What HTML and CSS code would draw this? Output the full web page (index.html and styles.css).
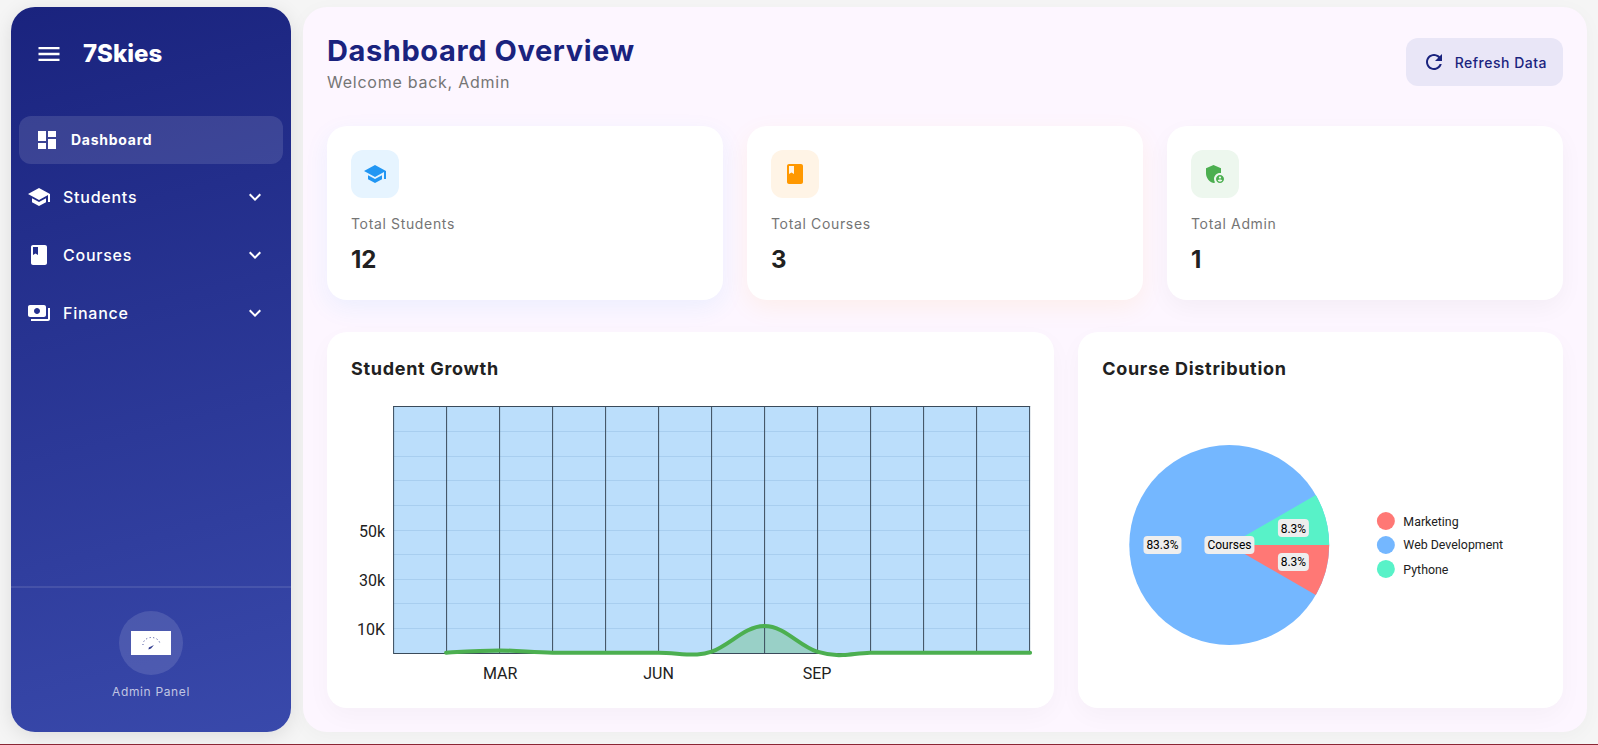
FILE: index.html
```html
<!DOCTYPE html>
<html lang="en">
<head>
    <meta charset="UTF-8">
    <meta name="viewport" content="width=device-width, initial-scale=1.0">
    <title>7Skies Dashboard</title>
    <link rel="stylesheet" href="styles.css">
</head>
<body>
    <aside class="sidebar">
        <div class="sidebar-header">
            <svg class="icon-menu" viewBox="0 0 24 24"><path d="M3 18h18v-2H3v2zm0-5h18v-2H3v2zm0-7v2h18V6H3z"/></svg>
            <span class="logo">7Skies</span>
        </div>
        <nav class="nav">
            <a class="nav-item active">
                <svg class="icon" viewBox="0 0 24 24"><path d="M3 13h8V3H3v10zm0 8h8v-6H3v6zm10 0h8V11h-8v10zm0-18v6h8V3h-8z"/></svg>
                <span>Dashboard</span>
            </a>
            <a class="nav-item">
                <svg class="icon" viewBox="0 0 24 24"><path d="M5 13.18v4L12 21l7-3.82v-4L12 17l-7-3.82zM12 3 1 9l11 6 9-4.91V17h2V9L12 3z"/></svg>
                <span>Students</span>
                <svg class="icon chevron" viewBox="0 0 24 24"><path d="M16.59 8.59 12 13.17 7.41 8.59 6 10l6 6 6-6z"/></svg>
            </a>
            <a class="nav-item">
                <svg class="icon" viewBox="0 0 24 24"><path d="M18 2H6c-1.1 0-2 .9-2 2v16c0 1.1.9 2 2 2h12c1.1 0 2-.9 2-2V4c0-1.1-.9-2-2-2zM6 4h5v8l-2.5-1.5L6 12V4z"/></svg>
                <span>Courses</span>
                <svg class="icon chevron" viewBox="0 0 24 24"><path d="M16.59 8.59 12 13.17 7.41 8.59 6 10l6 6 6-6z"/></svg>
            </a>
            <a class="nav-item">
                <svg class="icon" viewBox="0 0 24 24"><path d="M19 14V6c0-1.1-.9-2-2-2H3c-1.1 0-2 .9-2 2v8c0 1.1.9 2 2 2h14c1.1 0 2-.9 2-2zm-9-1c-1.66 0-3-1.34-3-3s1.34-3 3-3 3 1.34 3 3-1.34 3-3 3zm13-6v11c0 1.1-.9 2-2 2H4v-2h17V7h2z"/></svg>
                <span>Finance</span>
                <svg class="icon chevron" viewBox="0 0 24 24"><path d="M16.59 8.59 12 13.17 7.41 8.59 6 10l6 6 6-6z"/></svg>
            </a>
        </nav>
        <div class="sidebar-footer">
            <div class="avatar">
                <svg class="avatar-logo" viewBox="0 0 40 24">
                    <rect width="40" height="24" fill="#fff"/>
                    <path d="M12 14A8.5 7 0 0 1 29 13" fill="none" stroke="#2f3a8f" stroke-width="1" stroke-dasharray="1 2.6"/>
                    <path d="M17.5 18.5 17.8 16.4 23 14 20 17.5z" fill="#2f3a8f"/>
                </svg>
            </div>
            <div class="avatar-label">Admin Panel</div>
        </div>
    </aside>

    <main class="main">
        <header class="main-header">
            <div>
                <h1>Dashboard Overview</h1>
                <p>Welcome back, Admin</p>
            </div>
            <button class="refresh-btn" type="button">
                <svg class="icon" viewBox="0 0 24 24"><path d="M17.65 6.35C16.2 4.9 14.21 4 12 4c-4.42 0-7.99 3.58-7.99 8s3.57 8 7.99 8c3.73 0 6.84-2.55 7.73-6h-2.08c-.82 2.33-3.04 4-5.65 4-3.31 0-6-2.69-6-6s2.69-6 6-6c1.66 0 3.14.69 4.22 1.78L13 11h7V4l-2.35 2.35z"/></svg>
                Refresh Data
            </button>
        </header>

        <section class="stats">
            <div class="stat-card stat-blue">
                <div class="stat-icon">
                    <svg class="icon" viewBox="0 0 24 24"><path d="M5 13.18v4L12 21l7-3.82v-4L12 17l-7-3.82zM12 3 1 9l11 6 9-4.91V17h2V9L12 3z"/></svg>
                </div>
                <div class="stat-label">Total Students</div>
                <div class="stat-value">12</div>
            </div>
            <div class="stat-card stat-orange">
                <div class="stat-icon">
                    <svg class="icon" viewBox="0 0 24 24"><path d="M18 2H6c-1.1 0-2 .9-2 2v16c0 1.1.9 2 2 2h12c1.1 0 2-.9 2-2V4c0-1.1-.9-2-2-2zM6 4h5v8l-2.5-1.5L6 12V4z"/></svg>
                </div>
                <div class="stat-label">Total Courses</div>
                <div class="stat-value">3</div>
            </div>
            <div class="stat-card stat-green">
                <div class="stat-icon">
                    <svg class="icon" viewBox="0 0 24 24"><path d="M17 11c.34 0 .67.04 1 .09V6.27L10.5 3 3 6.27v4.91c0 4.54 3.2 8.79 7.5 9.82.55-.13 1.08-.32 1.6-.55-.69-.98-1.1-2.17-1.1-3.45 0-3.31 2.69-6 6-6z"/><path d="M17 13c-2.21 0-4 1.79-4 4s1.79 4 4 4 4-1.79 4-4-1.79-4-4-4zm0 1.38c.62 0 1.12.51 1.12 1.12s-.51 1.12-1.12 1.12-1.12-.51-1.12-1.12.5-1.12 1.12-1.12zm0 5.37c-.93 0-1.74-.46-2.24-1.17.05-.72 1.51-1.08 2.24-1.08s2.19.36 2.24 1.08c-.5.71-1.31 1.17-2.24 1.17z"/></svg>
                </div>
                <div class="stat-label">Total Admin</div>
                <div class="stat-value">1</div>
            </div>
        </section>

        <section class="charts">
            <div class="chart-card">
                <h3>Student Growth</h3>
                <svg class="chart" viewBox="351 392 679 292">
                    <defs>
                        <clipPath id="plotClip"><rect x="393" y="406" width="637" height="247"/></clipPath>
                    </defs>
                    <rect x="393" y="406" width="637" height="247" fill="#bbdefb"/>
                    <path class="area" clip-path="url(#plotClip)" d="M446 653C464 651.6 481 650.4 499.5 650.4C518 650.4 534 652.7 552.6 652.7L658.6 652.7C672 652.7 685 655 697 654.5C702 654.2 707 653.3 711.6 651.7C730 645 745 626 764.6 626C784 626 799 646 817 651.7C826 654.5 835 655.5 843 655C852 654.5 860 653 870 652.7L1030 652.7L1030 653Z"/>
                    <path class="grid-h" d="M393 431.5H1030M393 456.5H1030M393 480.5H1030M393 505.5H1030M393 530.5H1030M393 554.5H1030M393 579.5H1030M393 603.5H1030M393 628.5H1030"/>
                    <path class="grid-v" d="M393.5 406V653M446.5 406V653M499.5 406V653M552.5 406V653M605.5 406V653M658.5 406V653M711.5 406V653M764.5 406V653M817.5 406V653M870.5 406V653M923.5 406V653M976.5 406V653M1029.5 406V653"/>
                    <path class="grid-v" d="M393 406.5H1030M393 653.5H1030"/>
                    <path class="curve" d="M446 652.7C464 651.6 481 650.4 499.5 650.4C518 650.4 534 652.7 552.6 652.7L658.6 652.7C672 652.7 685 655 697 654.5C702 654.2 707 653.3 711.6 651.7C730 645 745 626 764.6 626C784 626 799 646 817 651.7C826 654.5 835 655.5 843 655C852 654.5 860 653 870 652.7L1030 652.7"/>
                    <text class="axis end" x="385" y="536.5">50k</text>
                    <text class="axis end" x="385" y="585.5">30k</text>
                    <text class="axis end" x="385" y="634.5">10K</text>
                    <text class="axis mid" x="500" y="679">MAR</text>
                    <text class="axis mid" x="658.5" y="679">JUN</text>
                    <text class="axis mid" x="817" y="679">SEP</text>
                </svg>
            </div>
            <div class="chart-card">
                <h3>Course Distribution</h3>
                <svg class="chart" viewBox="1102 392 437 292">
                    <circle cx="1229.3" cy="545" r="100" fill="#74b7ff"/>
                    <path d="M1229.3 545L1329.3 545A100 100 0 0 1 1315.9 595Z" fill="#ff7875"/>
                    <path d="M1229.3 545L1315.9 495A100 100 0 0 1 1329.3 545Z" fill="#58f2c8"/>
                    <rect class="pie-tag" x="1143.5" y="536" width="38" height="18" rx="4"/>
                    <text class="pie-label" x="1162.5" y="549.5">83.3%</text>
                    <rect class="pie-tag" x="1204.5" y="536" width="50" height="18" rx="4"/>
                    <text class="pie-label" x="1229.5" y="549.5">Courses</text>
                    <rect class="pie-tag" x="1278" y="519" width="31" height="18" rx="4"/>
                    <text class="pie-label" x="1293.5" y="532.5">8.3%</text>
                    <rect class="pie-tag" x="1278" y="553" width="31" height="18" rx="4"/>
                    <text class="pie-label" x="1293.5" y="566.5">8.3%</text>
                    <circle cx="1386" cy="521" r="9" fill="#ff7875"/>
                    <text class="legend" x="1403.5" y="525.5">Marketing</text>
                    <circle cx="1386" cy="545" r="9" fill="#74b7ff"/>
                    <text class="legend" x="1403.5" y="549.5">Web Development</text>
                    <circle cx="1386" cy="569" r="9" fill="#58f2c8"/>
                    <text class="legend" x="1403.5" y="574">Pythone</text>
                </svg>
            </div>
        </section>
    </main>
</body>
</html>
```

FILE: styles.css
```css
* {
    box-sizing: border-box;
}
html, body {
    margin: 0;
    height: 745px;
    overflow: hidden;
}
body {
    display: flex;
    gap: 12px;
    padding: 7px 11px 12px;
    background-color: #f5f5f5;
    border-bottom: 1px solid #8b2635;
    font-family: Inter, "Open Sans", sans-serif;
}
svg {
    display: block;
    fill: currentColor;
}
.icon {
    width: 24px;
    height: 24px;
    flex-shrink: 0;
}

/* sidebar */
.sidebar {
    width: 280px;
    display: flex;
    flex-direction: column;
    border-radius: 24px;
    color: #fff;
    background: linear-gradient(165deg, #1a237e 0%, #3949ab 100%);
    box-shadow: 0 4px 20px rgba(0, 0, 0, 0.1);
}
.sidebar-header {
    display: flex;
    align-items: center;
    gap: 20px;
    padding: 32px 24px;
}
.icon-menu {
    width: 28px;
    height: 28px;
}
.logo {
    padding-top: 1px;
    font-size: 24px;
    font-weight: 800;
    line-height: 28px;
}
.nav {
    flex: 1;
    padding: 16px 8px;
}
.nav-item {
    display: flex;
    align-items: center;
    gap: 12px;
    height: 50px;
    margin-bottom: 8px;
    padding: 0 16px 0 8px;
    font-size: 16px;
    font-weight: 500;
    letter-spacing: 0.75px;
}
.nav-item.active {
    height: 48px;
    padding-left: 16px;
    padding-bottom: 1px;
    border-radius: 12px;
    background-color: rgba(255, 255, 255, 0.12);
    font-size: 14px;
    font-weight: 700;
}
.nav-item.active .icon {
    margin-top: 1px;
}
.chevron {
    margin-left: auto;
}
.sidebar-footer {
    display: flex;
    flex-direction: column;
    align-items: center;
    padding: 23px 24px 31px;
    border-top: 2px solid rgba(255, 255, 255, 0.1);
}
.avatar {
    display: flex;
    align-items: center;
    justify-content: center;
    width: 64px;
    height: 64px;
    border-radius: 50%;
    background-color: rgba(255, 255, 255, 0.12);
}
.avatar-logo {
    width: 40px;
    height: 24px;
}
.avatar-label {
    margin-top: 8px;
    font-size: 12px;
    line-height: 18px;
    letter-spacing: 0.65px;
    color: rgba(255, 255, 255, 0.7);
}

/* main panel */
.main {
    flex: 1;
    min-width: 0;
    display: flex;
    flex-direction: column;
    padding: 24px;
    border-radius: 24px;
    background-color: #fdf6ff;
    box-shadow: 0 4px 20px rgba(0, 0, 0, 0.03);
}
.main-header {
    display: flex;
    align-items: center;
    justify-content: space-between;
    margin-bottom: 33px;
}
.main-header h1 {
    margin: 0;
    font-size: 29px;
    font-weight: 700;
    line-height: 40px;
    letter-spacing: 0.6px;
    color: #1a237e;
}
.main-header p {
    margin: 0;
    font-size: 16px;
    line-height: 22px;
    letter-spacing: 0.75px;
    color: #757575;
}
.refresh-btn {
    display: flex;
    align-items: center;
    gap: 9px;
    height: 48px;
    padding: 0 16px;
    border: none;
    border-radius: 12px;
    background-color: #e9e6f7;
    color: #1a237e;
    font-family: inherit;
    font-size: 14px;
    font-weight: 500;
    letter-spacing: 0.5px;
    cursor: pointer;
}

.stats {
    display: grid;
    grid-template-columns: repeat(3, 1fr);
    gap: 24px;
    margin-bottom: 32px;
}
.stat-card {
    height: 174px;
    padding: 24px;
    border-radius: 20px;
    background-color: #fff;
}
.stat-icon {
    display: flex;
    align-items: center;
    justify-content: center;
    width: 48px;
    height: 48px;
    border-radius: 12px;
}
.stat-blue {
    box-shadow: 0 8px 24px rgba(33, 150, 243, 0.08);
}
.stat-blue .stat-icon {
    background-color: #e6f4ff;
    color: #2196f3;
}
.stat-orange {
    box-shadow: 0 8px 24px rgba(255, 152, 0, 0.08);
}
.stat-orange .stat-icon {
    background-color: #fff4e6;
    color: #ff9800;
}
.stat-green {
    box-shadow: 0 8px 24px rgba(0, 0, 0, 0.04);
}
.stat-green .stat-icon {
    background-color: #edf7ee;
    color: #4caf50;
}
.stat-label {
    margin-top: 15px;
    font-size: 14px;
    line-height: 21px;
    letter-spacing: 0.65px;
    color: #757575;
}
.stat-value {
    margin-top: 8px;
    font-size: 24px;
    font-weight: 700;
    line-height: 36px;
    color: #212121;
}

/* charts */
.charts {
    flex: 1;
    display: grid;
    grid-template-columns: 3fr 2fr;
    gap: 24px;
}
.chart-card {
    padding: 24px;
    border-radius: 20px;
    background-color: #fff;
    box-shadow: 0 8px 24px rgba(0, 0, 0, 0.03);
}
.chart-card h3 {
    margin: 0 0 11px;
    padding-top: 1px;
    font-size: 18px;
    font-weight: 700;
    line-height: 24px;
    letter-spacing: 0.7px;
    color: #212121;
}
.chart {
    width: 100%;
    height: 292px;
    overflow: visible;
}
.area {
    fill: rgba(76, 175, 80, 0.3);
}
.grid-h {
    fill: none;
    stroke: rgba(60, 110, 170, 0.14);
    stroke-width: 1;
}
.grid-v {
    fill: none;
    stroke: #3a4a5a;
    stroke-width: 1;
}
.curve {
    fill: none;
    stroke: #4caf50;
    stroke-width: 4;
    stroke-linecap: round;
}
.axis {
    font-family: Roboto, sans-serif;
    font-size: 16px;
    fill: #212121;
}
.axis.end {
    text-anchor: end;
}
.axis.mid {
    text-anchor: middle;
}
.pie-tag {
    fill: #eeeeee;
}
.pie-label {
    font-family: Roboto, sans-serif;
    font-size: 12px;
    fill: #000;
    text-anchor: middle;
}
.legend {
    font-family: Roboto, sans-serif;
    font-size: 12.4px;
    fill: #212121;
}
```
